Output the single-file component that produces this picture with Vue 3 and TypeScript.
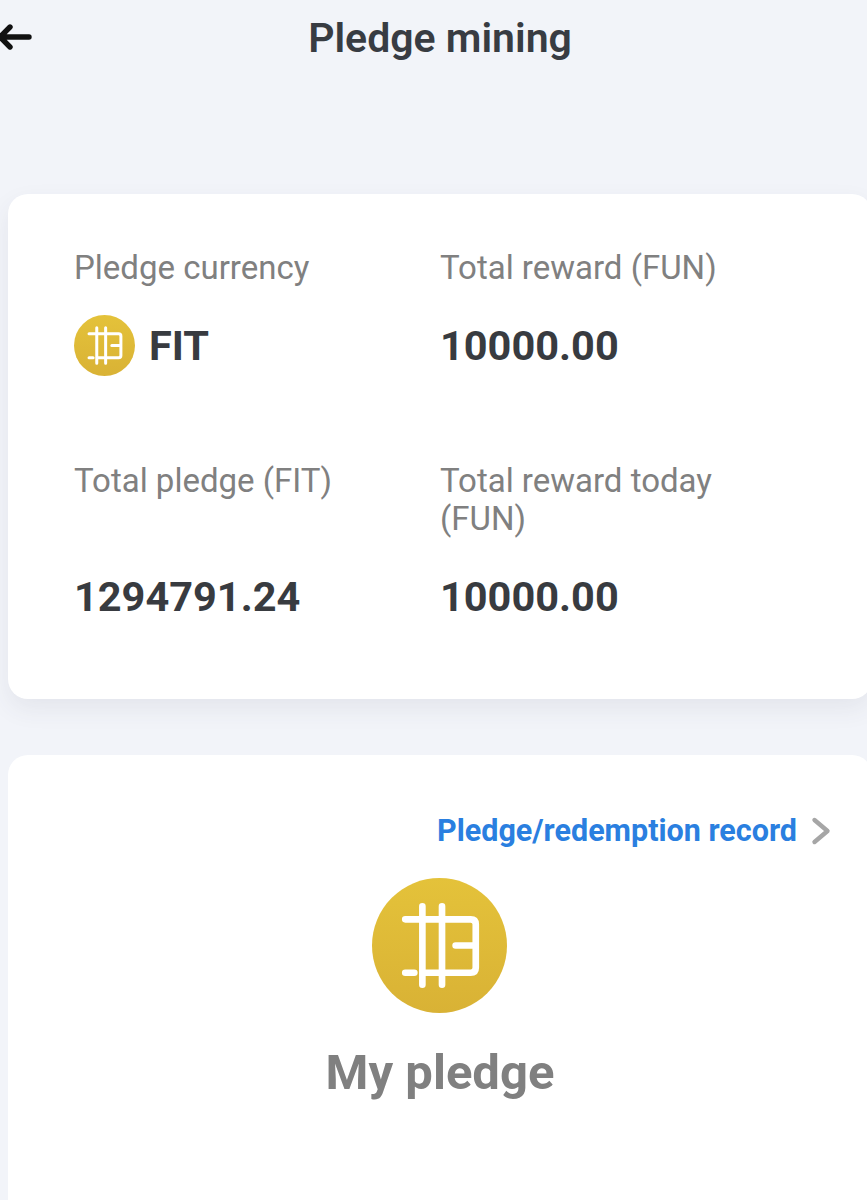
<template>
	<div class="viewport">
		<div class="page">
			<header class="header">
				<button class="back" aria-label="Back">
					<svg viewBox="0 0 36 28" width="36" height="28" fill="none" stroke="#111" stroke-width="5.4" stroke-linecap="round" stroke-linejoin="round">
						<path d="M3 14H31M12 4L2 14L12 24" />
					</svg>
				</button>
				<h1 class="title">Pledge mining</h1>
			</header>

			<section class="card summary">
				<div v-for="item in stats" :key="item.label" class="stat">
					<div class="label">{{ item.label }}</div>
					<div class="value">
						<svg v-if="item.coin" class="coin-small" viewBox="0 0 134 134">
							<use href="#fit-coin" />
						</svg>
						<span :class="{ 'coin-name': item.coin }">{{ item.value }}</span>
					</div>
				</div>
			</section>

			<section class="card mine">
				<a class="record">
					<span>Pledge/redemption record</span>
					<svg viewBox="0 0 20 30" width="20" height="30" fill="none" stroke="#a6a6a6" stroke-width="4.4" stroke-linecap="round" stroke-linejoin="round">
						<path d="M3.500 4L16.500 15L3.500 26" />
					</svg>
				</a>
				<svg class="coin-large" viewBox="0 0 134 134">
					<defs>
						<linearGradient id="coin-fill" x1="0" y1="0" x2="0" y2="1">
							<stop offset="0" stop-color="#e4c23a" />
							<stop offset="1" stop-color="#d9b235" />
						</linearGradient>
						<g id="fit-coin">
							<circle cx="67" cy="67" r="67" fill="url(#coin-fill)" />
							<path d="M33 41H98Q103 41 103 46V89Q103 94 98 94H52M33 94H42M83 67H103M50 28V106M69.500 28V106" fill="none" stroke="#fff" stroke-width="6.600" stroke-linecap="round" />
						</g>
					</defs>
					<use href="#fit-coin" />
				</svg>
				<h2 class="mine-title">My pledge</h2>
			</section>
		</div>
	</div>
</template>

<script setup lang="ts">
interface Stat {
	label: string;
	value: string;
	coin?: boolean;
}

const stats: Stat[] = [
	{ label: 'Pledge currency', value: 'FIT', coin: true },
	{ label: 'Total reward (FUN)', value: '10000.00' },
	{ label: 'Total pledge (FIT)', value: '1294791.24' },
	{ label: 'Total reward today (FUN)', value: '10000.00' }
];
</script>

<style>
html,
body {
	margin: 0;
	background: #f2f4f9;
}
</style>

<style scoped>
.viewport {
	width: 867px;
	height: 1200px;
	overflow: hidden;
	background: #f2f4f9;
	font-family: Roboto, "Liberation Sans", sans-serif;
}

.page {
	width: 880px;
	padding: 0 8px;
	box-sizing: border-box;
}

.header {
	position: relative;
	height: 194px;
	display: flex;
	justify-content: center;
	align-items: flex-start;
	padding-top: 15px;
	box-sizing: border-box;
}

.back {
	position: absolute;
	left: -10px;
	top: 23px;
	padding: 0;
	border: 0;
	background: none;
	line-height: 0;
}

.title {
	margin: 0;
	font-size: 41px;
	line-height: 46px;
	font-weight: 600;
	color: #383c42;
}

.card {
	background: #fff;
	border-radius: 20px;
}

.summary {
	display: grid;
	grid-template-columns: 366px 1fr;
	grid-template-rows: auto auto;
	align-content: start;
	row-gap: 86px;
	height: 505px;
	padding: 55px 60px 0 66px;
	box-sizing: border-box;
	box-shadow: 0 10px 24px rgba(60, 70, 90, 0.08);
}

.stat {
	display: flex;
	flex-direction: column;
}

.label {
	font-size: 33px;
	line-height: 38px;
	color: #808080;
	max-width: 300px;
}

.value {
	display: flex;
	align-items: center;
	margin-top: auto;
	padding-top: 27px;
	height: 62px;
	font-size: 41.500px;
	font-weight: 700;
	color: #383b40;
}

.coin-small {
	width: 61px;
	height: 61px;
	margin-right: 14px;
}

.mine {
	margin-top: 56px;
	height: 500px;
	display: flex;
	flex-direction: column;
	align-items: center;
	padding-top: 56px;
	box-sizing: border-box;
}

.record {
	align-self: flex-end;
	display: flex;
	align-items: center;
	gap: 14px;
	margin-right: 41px;
	font-size: 30.500px;
	line-height: 40px;
	font-weight: 700;
	color: #2a7fe0;
}

.coin-large {
	width: 135px;
	height: 135px;
	margin-top: 27px;
	margin-left: -2px;
}

.mine-title {
	margin: 29px 0 0;
	font-size: 49px;
	line-height: 62px;
	font-weight: 700;
	color: #808080;
}
</style>
